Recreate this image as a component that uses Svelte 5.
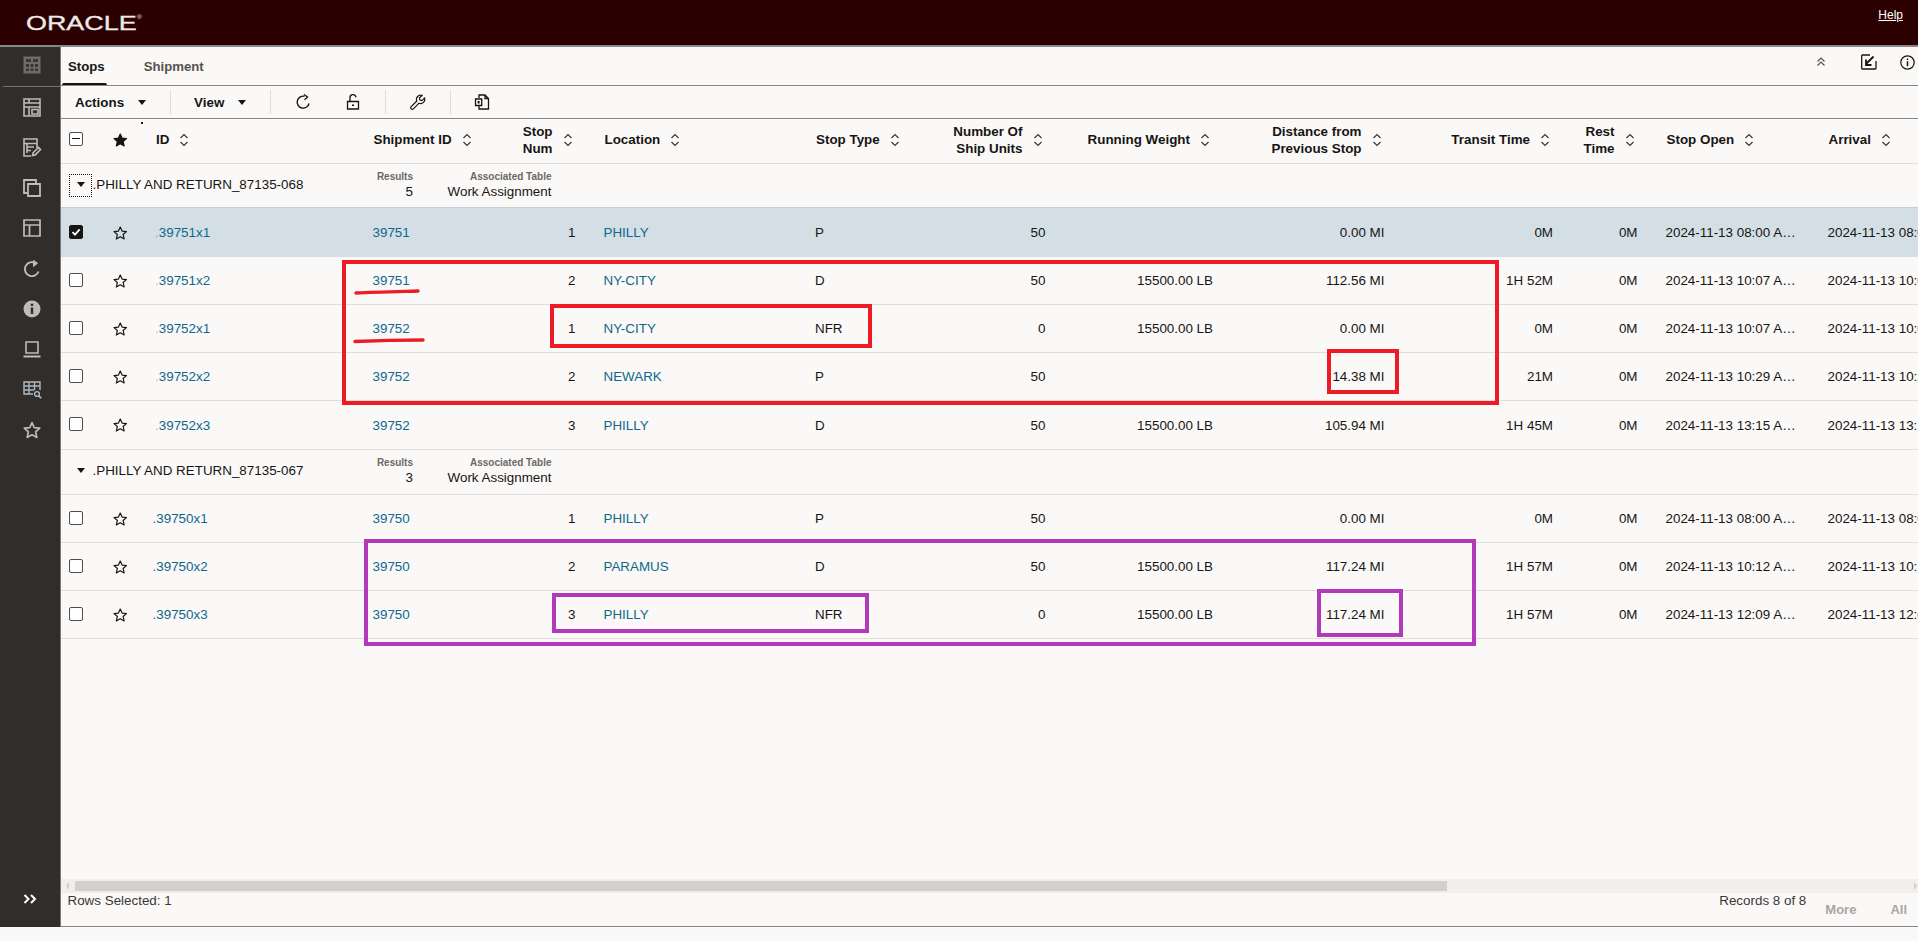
<script>
	const columns = [
		{ lines: ['ID'], left: true },
		{ lines: ['Shipment ID'], left: true },
		{ lines: ['Stop', 'Num'] },
		{ lines: ['Location'], left: true },
		{ lines: ['Stop Type'], left: true },
		{ lines: ['Number Of', 'Ship Units'] },
		{ lines: ['Running Weight'] },
		{ lines: ['Distance from', 'Previous Stop'] },
		{ lines: ['Transit Time'] },
		{ lines: ['Rest', 'Time'] },
		{ lines: ['Stop Open'], left: true },
		{ lines: ['Arrival'], left: true }
	];

	const groups = [
		{
			name: '.PHILLY AND RETURN_87135-068',
			results: 5,
			focused: true,
			height: 44,
			rows: [
				{ id: '39751x1', ship: '39751', num: 1, loc: 'PHILLY', type: 'P', units: 50, weight: '', dist: '0.00 MI', transit: '0M', time: '08:00', h: 49, selected: true },
				{ id: '39751x2', ship: '39751', num: 2, loc: 'NY-CITY', type: 'D', units: 50, weight: '15500.00 LB', dist: '112.56 MI', transit: '1H 52M', time: '10:07', h: 48 },
				{ id: '39752x1', ship: '39752', num: 1, loc: 'NY-CITY', type: 'NFR', units: 0, weight: '15500.00 LB', dist: '0.00 MI', transit: '0M', time: '10:07', h: 48 },
				{ id: '39752x2', ship: '39752', num: 2, loc: 'NEWARK', type: 'P', units: 50, weight: '', dist: '14.38 MI', transit: '21M', time: '10:29', h: 48 },
				{ id: '39752x3', ship: '39752', num: 3, loc: 'PHILLY', type: 'D', units: 50, weight: '15500.00 LB', dist: '105.94 MI', transit: '1H 45M', time: '13:15', h: 49 }
			]
		},
		{
			name: '.PHILLY AND RETURN_87135-067',
			results: 3,
			height: 45,
			tight: true,
			rows: [
				{ id: '39750x1', ship: '39750', num: 1, loc: 'PHILLY', type: 'P', units: 50, weight: '', dist: '0.00 MI', transit: '0M', time: '08:00', h: 48 },
				{ id: '39750x2', ship: '39750', num: 2, loc: 'PARAMUS', type: 'D', units: 50, weight: '15500.00 LB', dist: '117.24 MI', transit: '1H 57M', time: '10:12', h: 48 },
				{ id: '39750x3', ship: '39750', num: 3, loc: 'PHILLY', type: 'NFR', units: 0, weight: '15500.00 LB', dist: '117.24 MI', transit: '1H 57M', time: '12:09', h: 48 }
			]
		}
	];

	// hand-drawn review marks on top of the grid: x, y, w, h
	const marks = [
		{ color: 'red', box: [342, 260, 1157, 145] },
		{ color: 'red', box: [550, 304, 322, 44] },
		{ color: 'red', box: [1327, 349, 72, 45] },
		{ color: 'purple', box: [364, 539, 1112, 107] },
		{ color: 'purple', box: [552, 593, 317, 40] },
		{ color: 'purple', box: [1317, 589, 86, 48] }
	];
</script>

{#snippet sort()}
	<svg class="sort" width="10" height="14" viewBox="0 0 10 14" fill="none" stroke="#3a3836" stroke-width="1.2">
		<path d="M1.5 5 5 1.5 8.5 5M1.5 9 5 12.5 8.5 9" />
	</svg>
{/snippet}

{#snippet star(filled)}
	<svg width="20" height="20" viewBox="0 0 16 16" fill={filled ? '#161513' : 'none'} stroke="#161513" stroke-width="1.3" stroke-linejoin="round">
		<polygon points="8,1.4 10,5.9 14.9,6.4 11.2,9.7 12.3,14.6 8,12.1 3.7,14.6 4.8,9.7 1.1,6.4 6,5.9" />
	</svg>
{/snippet}

<div class="app">
	<header class="topbar">
		<span class="logo">ORACLE<sup>®</sup></span>
		<span class="help">Help</span>
	</header>

	<div class="main">
		<nav class="sidebar">
			<div class="side-slot first">
				<svg width="18" height="18" viewBox="0 0 18 18">
					<rect x="0.5" y="0.5" width="17" height="17" fill="#6e6c69" />
					<path d="M3 3h5v3H3zM10 3h5v3h-5zM3 8h3v3H3zM7.5 8h3v3h-3zM12 8h3v3h-3zM3 12.5h3V15H3zM7.5 12.5h3V15h-3zM12 12.5h3V15h-3z" fill="#3a3836" />
				</svg>
			</div>
			<div class="side-slot">
				<svg width="18" height="19" viewBox="0 0 18 19" fill="none" stroke="#bdbcbb" stroke-width="1.6">
					<path d="M1 1h16v17H1zM1 5h16M1 9h16M6 1v4M6 9v9M9 11.5h6v4.5H9z" />
				</svg>
			</div>
			<div class="side-slot">
				<svg width="19" height="19" viewBox="0 0 19 19" fill="none" stroke="#bdbcbb" stroke-width="1.6">
					<path d="M8 18H1V1h13v9M1 5.5h13M4 5.5V15M4 9h7M4 12.5h4" />
					<path d="M9.5 17.5l.6-2.7 5.4-5.3 2 2-5.3 5.4z" />
				</svg>
			</div>
			<div class="side-slot">
				<svg width="18" height="18" viewBox="0 0 18 18" fill="none" stroke="#bdbcbb" stroke-width="1.8">
					<path d="M4 14H1V1h12v3M5 5h12v12H5z" />
				</svg>
			</div>
			<div class="side-slot">
				<svg width="18" height="18" viewBox="0 0 18 18" fill="none" stroke="#bdbcbb" stroke-width="1.7">
					<path d="M1 1h16v16H1zM1 6h16M6.5 6v11" />
				</svg>
			</div>
			<div class="side-slot">
				<svg width="18" height="18" viewBox="0 0 18 18" fill="none" stroke="#bdbcbb" stroke-width="1.9">
					<path d="M15.5 11.5A7 7 0 1 1 10.5 2.3" />
					<path d="M10.5 0.5 14.5 3.2 10.5 6.5z" fill="#bdbcbb" stroke-width="1" />
				</svg>
			</div>
			<div class="side-slot">
				<svg width="18" height="18" viewBox="0 0 18 18">
					<circle cx="9" cy="9" r="8.5" fill="#bdbcbb" />
					<path d="M7.8 7.5h2.4V14H7.8zM7.8 3.8h2.4v2.2H7.8z" fill="#312d2a" />
				</svg>
			</div>
			<div class="side-slot">
				<svg width="18" height="17" viewBox="0 0 18 17" fill="none" stroke="#bdbcbb" stroke-width="1.6">
					<path d="M3 1h12v11H3z" />
					<path d="M0.5 15.5h17" stroke-width="2" />
				</svg>
			</div>
			<div class="side-slot">
				<svg width="19" height="18" viewBox="0 0 19 18" fill="none" stroke="#a9bac4" stroke-width="1.4">
					<path d="M10 13H1V1h16v8M1 5h16M1 9h10M6 1v12M11.5 1v8" />
					<circle cx="14" cy="13" r="2.4" />
					<path d="M15.8 14.8 18.2 17.2" stroke-width="1.8" />
				</svg>
			</div>
			<div class="side-slot">
				<svg width="18" height="18" viewBox="0 0 16 16" fill="none" stroke="#bdbcbb" stroke-width="1.5" stroke-linejoin="round">
					<polygon points="8,1.4 10,5.9 14.9,6.4 11.2,9.7 12.3,14.6 8,12.1 3.7,14.6 4.8,9.7 1.1,6.4 6,5.9" />
				</svg>
			</div>
			<div class="expand">
				<svg width="14" height="10" viewBox="0 0 14 10" fill="none" stroke="#fff" stroke-width="2">
					<path d="M1.5 1 5.5 5 1.5 9M8 1 12 5 8 9" />
				</svg>
			</div>
		</nav>

		<section class="content">
			<div class="tabs">
				<span class="tab active">Stops</span>
				<span class="tab">Shipment</span>
				<div class="tab-tools">
					<svg width="10" height="10" viewBox="0 0 10 10" fill="none" stroke="#55524f" stroke-width="1.2">
						<path d="M1.5 4.5 5 1 8.5 4.5M1.5 8.5 5 5 8.5 8.5" />
					</svg>
					<svg class="tool-box" width="16" height="16" viewBox="0 0 16 16" fill="none" stroke="#161513" stroke-width="1.3">
						<path d="M9 1H1.5a.8.8 0 0 0-.8.8v12.4a.8.8 0 0 0 .8.8h12.7a.8.8 0 0 0 .8-.8V7" />
						<path d="M12.5 2.5 5 10M5 5.5V11h5.5" stroke-width="1.8" />
					</svg>
					<svg class="tool-info" width="15" height="15" viewBox="0 0 15 15" fill="none" stroke="#161513" stroke-width="1.2">
						<circle cx="7.5" cy="7.5" r="6.7" />
						<path d="M7.5 6.3v5M7.5 3.4v1.6" stroke-width="1.5" />
					</svg>
				</div>
			</div>

			<div class="toolbar">
				<span class="menu">Actions</span><i class="caret"></i>
				<i class="divider"></i>
				<span class="menu view">View</span><i class="caret"></i>
				<i class="divider"></i>
				<svg class="tool refresh" width="16" height="16" viewBox="0 0 16 16" fill="none" stroke="#161513" stroke-width="1.4">
					<path d="M14 9.5A6 6 0 1 1 9.5 2.3" />
					<path d="M9 0.5 12.6 3 9.5 5.8" stroke-width="1.3" />
				</svg>
				<svg class="tool lock" width="16" height="16" viewBox="0 0 16 16" fill="none" stroke="#161513" stroke-width="1.3">
					<path d="M2.5 7.5h11v7.5h-11zM5 7.5V4a3 3 0 0 1 6-.7" />
					<path d="M7 10.5h2v1.6H7z" fill="#161513" stroke="none" />
				</svg>
				<i class="divider narrow"></i>
				<svg class="tool wrench" width="16" height="16" viewBox="0 0 16 16" fill="none" stroke="#161513" stroke-width="1.2">
					<path d="M1.2 12.6 6.8 7A4.2 4.2 0 0 1 12 1.4L9.4 4l.5 2 2 .6L14.6 4A4.2 4.2 0 0 1 9 9.2l-5.6 5.6a1.5 1.5 0 0 1-2.2-2.2z" />
				</svg>
				<i class="divider"></i>
				<svg class="tool doc" width="16" height="16" viewBox="0 0 16 16" fill="none" stroke="#161513" stroke-width="1.3">
					<path d="M5 4V1h6l3.5 3.5V15H5v-3M11 1v3.5h3.5" />
					<path d="M1.5 5h6.2v6.5H1.5z" />
					<path d="M3.6 7h2v2.5h-2z" fill="#161513" stroke="none" />
				</svg>
			</div>

			<div class="grid-head row-grid">
				<span class="speck"></span>
				<div class="cell"><span class="check minus"></span></div>
				<div class="cell">{@render star(true)}</div>
				{#each columns as col}
					<div class="cell head-cell" class:left={col.left}>
						<div class="head-label">
							{#each col.lines as line}<span>{line}</span>{/each}
						</div>
						{@render sort()}
					</div>
				{/each}
			</div>

			{#each groups as group}
				<div class="group" style="height: {group.height}px">
					<div class="toggle" class:focused={group.focused}><i class="caret"></i></div>
					<div class="group-name">{group.name}</div>
					<div class="group-stat">
						<span class="stat-label">Results</span>
						<span>{group.results}</span>
					</div>
					<div class="group-stat">
						<span class="stat-label">Associated Table</span>
						<span>Work Assignment</span>
					</div>
				</div>
				{#each group.rows as row}
					<div class="row row-grid" class:selected={row.selected} style="height: {row.h}px">
						<div class="cell">
							<span class="check" class:checked={row.selected}>
								{#if row.selected}
									<svg width="10" height="10" viewBox="0 0 10 10" fill="none" stroke="#fff" stroke-width="1.8"><path d="M1.5 5.2 4 7.6 8.6 2.4" /></svg>
								{/if}
							</span>
						</div>
						<div class="cell">{@render star(false)}</div>
						<div class="cell link" class:tight={group.tight}><span class="dot">.</span>{row.id}</div>
						<div class="cell link">{row.ship}</div>
						<div class="cell num">{row.num}</div>
						<div class="cell link">{row.loc}</div>
						<div class="cell">{row.type}</div>
						<div class="cell num">{row.units}</div>
						<div class="cell num">{row.weight}</div>
						<div class="cell num">{row.dist}</div>
						<div class="cell num">{row.transit}</div>
						<div class="cell num">0M</div>
						<div class="cell">2024-11-13 {row.time} A…</div>
						<div class="cell">2024-11-13 {row.time} A…</div>
					</div>
				{/each}
			{/each}

			<div class="spacer"></div>

			<div class="hscroll">
				<i class="arrow back"></i>
				<div class="thumb"></div>
				<i class="arrow next"></i>
			</div>

			<footer class="footer">
				<span>Rows Selected: 1</span>
				<span class="records">Records 8 of 8</span>
				<span class="pager">More</span>
				<span class="pager all">All</span>
			</footer>
		</section>
	</div>

	{#each marks as mark}
		<div class="mark {mark.color}" style="left: {mark.box[0]}px; top: {mark.box[1]}px; width: {mark.box[2]}px; height: {mark.box[3]}px"></div>
	{/each}
	<svg class="scribble" width="1918" height="941" fill="none" stroke="#ed1c24" stroke-width="3.4" stroke-linecap="round">
		<path d="M356 293C375 292 400 291.5 418 291" />
		<path d="M355 341.5C378 340.5 402 340 423 340" />
	</svg>
</div>

<style>
	:global(body) {
		margin: 0;
		background: #fbf9f8;
	}

	.app {
		position: relative;
		height: 941px;
		overflow: hidden;
		font-family: 'Liberation Sans', Arial, sans-serif;
		font-size: 13.4px;
		color: #161513;
		background: #fbf9f8;
	}

	.topbar {
		display: flex;
		justify-content: space-between;
		height: 45px;
		background: #2a0000;
		border-bottom: 2px solid #878787;
	}

	.logo {
		display: block;
		margin: 12px 0 0 26px;
		font-size: 19.5px;
		line-height: 22px;
		color: #eeeae8;
		-webkit-text-stroke: 0.3px #eeeae8;
		transform: scaleX(1.38);
		transform-origin: left;
	}

	.logo sup {
		font-size: 5px;
		vertical-align: 11px;
		line-height: 0;
		-webkit-text-stroke: 0;
	}

	.help {
		margin: 7px 15px 0 0;
		font-size: 12px;
		line-height: 16px;
		color: #fff;
		text-decoration: underline;
	}

	.main {
		display: flex;
		height: 880px;
	}

	.sidebar {
		display: flex;
		flex-direction: column;
		flex: none;
		width: 59.5px;
		background: #312d2a;
		border-right: 1.5px solid #7b7977;
	}

	.side-slot {
		display: flex;
		align-items: center;
		justify-content: center;
		flex: none;
		height: 40.4px;
		padding-left: 5px;
	}

	.side-slot.first {
		box-sizing: border-box;
		height: 40px;
		padding-bottom: 4px;
		margin-left: 3px;
		padding-left: 2px;
		border-bottom: 1px solid #77736f;
	}

	.expand {
		margin-top: auto;
		padding: 0 0 23px 23px;
		line-height: 0;
	}

	.content {
		display: flex;
		flex-direction: column;
		flex: 1;
		min-width: 0;
		border-bottom: 1px solid #878787;
	}

	.tabs {
		display: flex;
		flex: none;
		align-items: center;
		height: 38px;
		padding-left: 1px;
		border-bottom: 1px solid #878787;
	}

	.tab {
		position: relative;
		display: flex;
		align-items: center;
		height: 38px;
		padding: 0 32.5px 0 6.5px;
		font-size: 13.2px;
		font-weight: 700;
		color: #55524f;
	}

	.tab.active {
		color: #161513;
	}

	.tab.active::after {
		content: '';
		position: absolute;
		left: 0;
		bottom: 0;
		width: 45px;
		height: 2.5px;
		border-radius: 2px 2px 0 0;
		background: #161513;
	}

	.tab-tools {
		display: flex;
		align-items: center;
		margin-left: auto;
		padding: 0 3.5px 8px 0;
	}

	.tool-box {
		margin-left: 35.5px;
	}

	.tool-info {
		margin-left: 22.5px;
	}

	.toolbar {
		display: flex;
		flex: none;
		align-items: center;
		height: 32px;
		padding-left: 14.5px;
		border-bottom: 1px solid #878787;
		font-weight: 700;
	}

	.caret {
		display: block;
		width: 0;
		height: 0;
		border-left: 4.5px solid transparent;
		border-right: 4.5px solid transparent;
		border-top: 5px solid #161513;
	}

	.menu + .caret {
		margin-left: 14px;
	}

	.divider {
		display: block;
		width: 1px;
		height: 24px;
		margin-left: 24px;
		background: #dedcda;
	}

	.divider.narrow {
		margin-left: 23.5px;
	}

	.view {
		margin-left: 23px;
	}

	.tool {
		flex: none;
		margin-left: 24px;
	}

	.tool.lock {
		margin-left: 34px;
	}

	.tool.doc {
		margin-left: 23px;
	}

	.row-grid {
		display: grid;
		grid-template-columns: 44px 42.5px 217.5px 115px 116px 211.5px 112.5px 146px 167.5px 171.5px 168.5px 84.5px 162px 180px;
	}

	.grid-head {
		position: relative;
		flex: none;
		height: 44px;
		border-bottom: 1px solid #e0dedc;
		font-weight: 700;
	}

	.grid-head .cell {
		padding-bottom: 3px;
	}

	.speck {
		position: absolute;
		left: 80px;
		top: 3px;
		width: 2px;
		height: 2px;
		background: #161513;
	}

	.cell {
		display: flex;
		align-items: center;
		box-sizing: border-box;
		min-width: 0;
		padding: 0 20px 0 8px;
		white-space: nowrap;
	}

	.cell.num {
		justify-content: flex-end;
	}

	.cell.link {
		color: #0f688c;
	}

	.dot {
		opacity: 0.4;
	}

	.cell.tight {
		margin-left: -2.5px;
	}

	.cell.tight .dot {
		opacity: 1;
	}

	.head-cell {
		justify-content: flex-end;
		gap: 10px;
		padding-right: 23px;
		line-height: 17px;
	}

	.head-cell.left {
		justify-content: flex-start;
		padding-left: 9px;
	}

	.head-label {
		display: flex;
		flex-direction: column;
		align-items: flex-end;
	}

	.sort {
		flex: none;
	}

	.check {
		display: flex;
		align-items: center;
		justify-content: center;
		box-sizing: border-box;
		width: 14px;
		height: 14px;
		margin: 0 0 1.5px 0.5px;
		border: 1.4px solid #4f4c4a;
		border-radius: 2px;
		background: #fff;
	}

	.check.minus::before {
		content: '';
		width: 8px;
		height: 1.4px;
		background: #161513;
	}

	.check.checked {
		border-color: #161513;
		background: #161513;
	}

	.group {
		display: grid;
		grid-template-columns: 32px 247px 73.5px 138.5px;
		align-items: center;
		flex: none;
		box-sizing: border-box;
		padding-bottom: 3px;
		border-bottom: 1px solid #e0dedc;
	}

	.toggle {
		display: flex;
		align-items: center;
		justify-content: center;
		box-sizing: border-box;
		width: 23px;
		height: 23px;
		margin: 3px 0 0 8.5px;
		padding-bottom: 3px;
		border: 1px solid transparent;
	}

	.toggle.focused {
		border: 1px dotted #161513;
	}

	.group-stat {
		display: flex;
		flex-direction: column;
		align-items: flex-end;
		line-height: 15px;
	}

	.stat-label {
		font-size: 10px;
		line-height: 14px;
		font-weight: 700;
		color: #6b6865;
	}

	.row {
		flex: none;
		box-sizing: border-box;
		border-bottom: 1px solid #e0dedc;
	}

	.row.selected {
		border-bottom: none;
		background: #d3dee5;
		box-shadow: 0 -1px 0 #c4ced6;
	}

	.spacer {
		flex: 1;
	}

	.hscroll {
		display: flex;
		align-items: center;
		flex: none;
		height: 14px;
		background: #f0efee;
	}

	.thumb {
		width: 1372px;
		height: 10px;
		margin-left: 6px;
		background: #d1d0ce;
	}

	.arrow {
		display: block;
		width: 0;
		height: 0;
		border-top: 4px solid transparent;
		border-bottom: 4px solid transparent;
	}

	.arrow.back {
		margin-left: 5px;
		border-right: 3px solid #d1d0ce;
	}

	.arrow.next {
		margin-left: auto;
		margin-right: 1px;
		border-left: 3px solid #d1d0ce;
	}

	.footer {
		display: flex;
		flex: none;
		align-items: flex-start;
		height: 33px;
		padding-left: 7px;
		line-height: 15px;
		color: #3a3836;
	}

	.records {
		margin-left: auto;
		margin-right: 19px;
	}

	.pager {
		margin: 9px 34px 0 0;
		font-size: 13px;
		font-weight: 700;
		color: #a8a6a4;
	}

	.pager.all {
		margin-right: 11px;
	}

	.mark {
		position: absolute;
		box-sizing: border-box;
		border: 4px solid;
	}

	.mark.red {
		border-color: #ed1c24;
	}

	.mark.purple {
		border-color: #b23ab8;
	}

	.scribble {
		position: absolute;
		left: 0;
		top: 0;
	}
</style>
